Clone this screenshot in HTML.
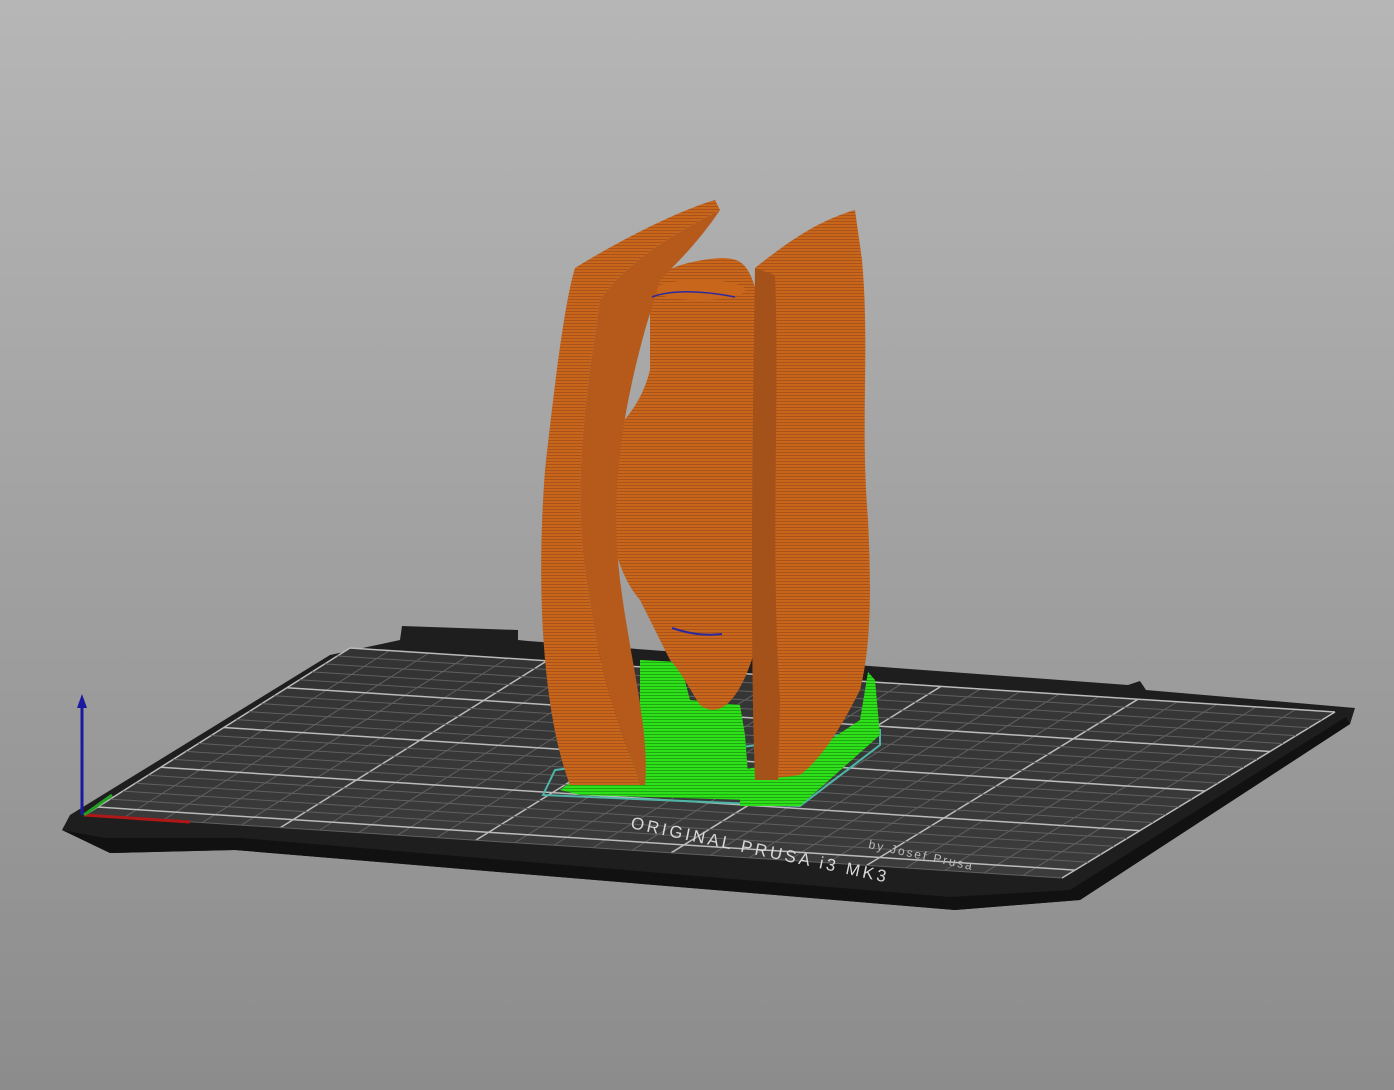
<!DOCTYPE html>
<html><head><meta charset="utf-8"><style>
html,body{margin:0;padding:0;width:1394px;height:1090px;overflow:hidden;background:linear-gradient(#b6b6b6,#8c8c8c);}
svg{position:absolute;left:0;top:0}
</style></head><body>
<svg width="1394" height="1090" viewBox="0 0 1394 1090">
<defs>
<linearGradient id="plate" x1="0" y1="0" x2="0" y2="1"><stop offset="0" stop-color="#333"/><stop offset="1" stop-color="#3c3c3c"/></linearGradient>
<pattern id="stripe" width="4" height="3" patternUnits="userSpaceOnUse"><rect width="4" height="3" fill="#c8661c"/><rect y="2" width="4" height="1" fill="#a9531a"/></pattern>
<pattern id="gstripe" width="4" height="3" patternUnits="userSpaceOnUse"><rect width="4" height="3" fill="#2ee01a"/><rect y="2" width="4" height="1" fill="#1fa812"/></pattern>
</defs>
<polygon points="402,626 518,630 518,640 528,641 1128,685 1140,681 1146,690 1355,708 1350,724 1080,900 955,910 235,850 110,853 62,830 70,815 330,655 400,640" fill="#1e1e1e"/>
<polygon points="62,830 110,853 235,850 955,910 1080,900 1350,724 1346,717 1070,890 950,897 240,838 105,838" fill="#111"/>
<polygon points="350,648 1335,712 1062,878 85,815" fill="url(#plate)"/>
<g id="grid" stroke-width="1"></g>
<text x="630" y="828" fill="#d8d8d8" font-family="Liberation Sans, sans-serif" font-size="17" letter-spacing="3" transform="rotate(12 630 828)">ORIGINAL PRUSA i3 MK3</text>
<text x="868" y="848" fill="#bbb" font-family="Liberation Sans, sans-serif" font-size="12" letter-spacing="2" transform="rotate(12 868 848)">by Josef Prusa</text>
<polygon points="555,770 880,730 880,745 800,806 543,795" fill="none" stroke="#4fb5a8" stroke-width="2"/>
<polygon points="640,660 680,662 690,700 740,705 745,735 750,800 580,795 560,790 600,760 640,750" fill="url(#gstripe)"/>
<polygon points="800,760 860,720 868,672 875,680 880,735 800,806 740,806 740,770" fill="url(#gstripe)"/>
<!-- middle figure -->
<path d="M650,300 C640,280 670,262 720,258 C740,258 750,262 758,300 C770,380 760,460 760,520 L755,650 C740,700 720,720 700,705 C690,690 680,670 670,660 L640,600 C605,560 600,470 612,440 C620,420 640,410 650,370 Z" fill="url(#stripe)"/>
<ellipse cx="705" cy="330" rx="50" ry="45" fill="url(#stripe)"/>
<ellipse cx="650" cy="470" rx="45" ry="55" fill="url(#stripe)"/>
<ellipse cx="700" cy="290" rx="45" ry="10" fill="#c8661c"/>
<!-- left slab -->
<path d="M575,268 C620,240 680,210 715,200 L720,210 C660,240 620,270 600,300 C585,400 570,500 590,600 C600,680 625,740 640,785 L570,785 C545,720 535,600 545,470 C555,380 565,300 575,268 Z" fill="url(#stripe)"/>
<path d="M600,300 C620,270 660,240 720,210 C700,240 680,260 660,280 L645,330 C620,420 610,500 620,580 C630,660 650,730 645,785 L640,785 C625,740 600,680 590,600 C570,500 585,400 600,300 Z" fill="#b55a1a"/>
<!-- right slab -->
<path d="M755,268 C790,240 820,220 855,210 L862,260 C870,350 860,420 868,520 C872,600 870,650 860,690 C840,730 820,760 800,775 L760,780 C755,700 750,600 760,500 Z" fill="url(#stripe)"/>
<path d="M755,268 L775,275 C780,400 770,550 780,700 L778,780 L755,780 C750,650 752,450 755,268 Z" fill="#a5511a"/>
<path d="M652,297 C670,290 700,290 735,297" stroke="#2a2aa0" stroke-width="1.5" fill="none"/>
<path d="M672,628 C690,634 705,636 722,634" stroke="#2a2aa0" stroke-width="2" fill="none"/>
<line x1="82" y1="815" x2="82" y2="705" stroke="#1a1aa0" stroke-width="3"/>
<polygon points="77,708 87,708 82,694" fill="#1a1aa0"/>
<line x1="84" y1="815" x2="190" y2="822" stroke="#b01818" stroke-width="3"/>
<line x1="84" y1="815" x2="112" y2="795" stroke="#22a022" stroke-width="3"/>
</svg>
<script>
const g=document.getElementById('grid');
const TL=[350,648],TR=[1335,712],BR=[1062,878],BL=[85,815];
function P(u,v){const a=[TL[0]+(TR[0]-TL[0])*u,TL[1]+(TR[1]-TL[1])*u],b=[BL[0]+(BR[0]-BL[0])*u,BL[1]+(BR[1]-BL[1])*u];return[a[0]+(b[0]-a[0])*v,a[1]+(b[1]-a[1])*v];}
let s='';
for(let i=0;i<=25;i++){const u=i/25,p=P(u,0),q=P(u,1);const maj=i%5==0;s+=`<line x1="${p[0]}" y1="${p[1]}" x2="${q[0]}" y2="${q[1]}" stroke="${maj?'#bbb':'#606060'}" stroke-width="${maj?1.5:1}"/>`;}
for(let j=0;j<=21;j++){const v=j/21,p=P(0,v),q=P(1,v);const maj=j%5==0;s+=`<line x1="${p[0]}" y1="${p[1]}" x2="${q[0]}" y2="${q[1]}" stroke="${maj?'#bbb':'#606060'}" stroke-width="${maj?1.5:1}"/>`;}
g.innerHTML=s;
</script>
</body></html>
